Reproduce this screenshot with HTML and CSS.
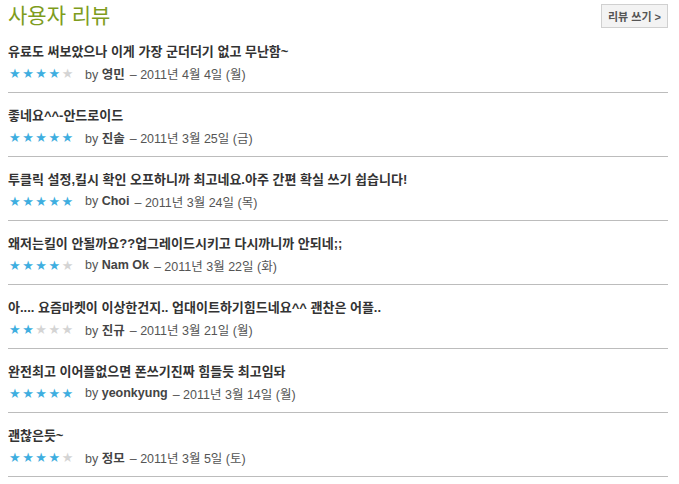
FILE: index.html
```html
<!DOCTYPE html>
<html lang="ko">
<head>
    <meta charset="UTF-8">
    <title>사용자 리뷰</title>
    <link rel="stylesheet" href="styles.css">
</head>
<body>
    <div class="reviews">
        <div class="reviews-head">
            <h2>사용자 리뷰</h2>
            <button type="button" class="write-btn">리뷰 쓰기 &gt;</button>
        </div>

        <ul class="review-list">
            <li class="review">
                <p class="review-title">유료도 써보았으나 이게 가장 군더더기 없고 무난함~</p>
                <div class="review-meta">
                    <span class="stars"><b>★★★★</b>★</span>
                    <span class="by">by <strong>영민</strong></span>
                    <span class="date">– 2011년 4월 4일 (월)</span>
                </div>
            </li>
            <li class="review">
                <p class="review-title">좋네요^^-안드로이드</p>
                <div class="review-meta">
                    <span class="stars"><b>★★★★★</b></span>
                    <span class="by">by <strong>진솔</strong></span>
                    <span class="date">– 2011년 3월 25일 (금)</span>
                </div>
            </li>
            <li class="review">
                <p class="review-title">투클릭 설정,킬시 확인 오프하니까 최고네요.아주 간편 확실 쓰기 쉽습니다!</p>
                <div class="review-meta">
                    <span class="stars"><b>★★★★★</b></span>
                    <span class="by">by <strong>Choi</strong></span>
                    <span class="date">– 2011년 3월 24일 (목)</span>
                </div>
            </li>
            <li class="review">
                <p class="review-title">왜저는킬이 안될까요??업그레이드시키고 다시까니까 안되네;;</p>
                <div class="review-meta">
                    <span class="stars"><b>★★★★</b>★</span>
                    <span class="by">by <strong>Nam Ok</strong></span>
                    <span class="date">– 2011년 3월 22일 (화)</span>
                </div>
            </li>
            <li class="review">
                <p class="review-title">아.... 요즘마켓이 이상한건지.. 업대이트하기힘드네요^^ 괜찬은 어플..</p>
                <div class="review-meta">
                    <span class="stars"><b>★★</b>★★★</span>
                    <span class="by">by <strong>진규</strong></span>
                    <span class="date">– 2011년 3월 21일 (월)</span>
                </div>
            </li>
            <li class="review">
                <p class="review-title">완전최고 이어플없으면 폰쓰기진짜 힘들듯 최고임돠</p>
                <div class="review-meta">
                    <span class="stars"><b>★★★★★</b></span>
                    <span class="by">by <strong>yeonkyung</strong></span>
                    <span class="date">– 2011년 3월 14일 (월)</span>
                </div>
            </li>
            <li class="review">
                <p class="review-title">괜찮은듯~</p>
                <div class="review-meta">
                    <span class="stars"><b>★★★★</b>★</span>
                    <span class="by">by <strong>정모</strong></span>
                    <span class="date">– 2011년 3월 5일 (토)</span>
                </div>
            </li>
        </ul>
    </div>
</body>
</html>
```

FILE: styles.css
```css
*{
    margin:0;
    padding:0;
    box-sizing:border-box;
}
body {
    background-color:#fff;
    font-family:"Liberation Sans", "Noto Sans CJK KR", sans-serif;
    color:#444;
}
.reviews {
    width:660px;
    margin-left:8px;
}
.reviews-head {
    display:flex;
    align-items:center;
    justify-content:space-between;
    height:29px;
    padding-top:3px;
}
.reviews-head h2 {
    font-size:21px;
    font-weight:normal;
    color:#7e9c1c;
    line-height:26px;
}
.write-btn {
    font-family:inherit;
    font-size:11px;
    font-weight:bold;
    color:#555;
    background-color:#f3f3f3;
    border:1px solid #d0d0d0;
    width:67px;
    height:24px;
}
.review-list {
    list-style:none;
}
.review {
    padding:13px 0 8px;
    border-bottom:1px solid #bcbcbc;
}
.review-title {
    font-size:13px;
    font-weight:bold;
    line-height:20px;
    color:#333;
}
.review-meta {
    display:flex;
    align-items:center;
    height:22px;
    font-size:12.5px;
    color:#555;
}
.stars {
    font-family:"DejaVu Sans", sans-serif;
    font-size:13px;
    letter-spacing:1.5px;
    color:#d4d4d4;
    width:76px;
    margin-left:1px;
}
.stars b {
    font-weight:normal;
    color:#3eaee0;
}
.by strong {
    color:#444;
}
.date {
    margin-left:5px;
}
```
